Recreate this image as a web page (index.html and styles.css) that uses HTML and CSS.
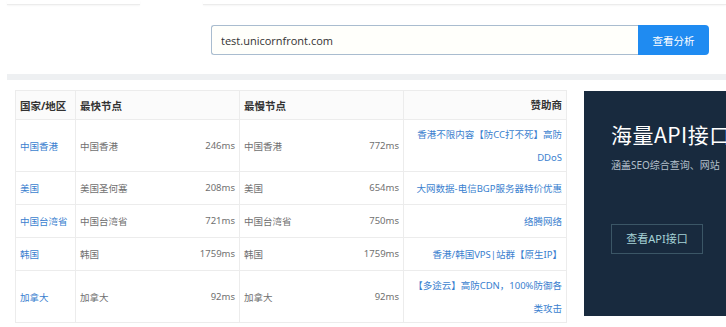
FILE: index.html
```html
<!DOCTYPE html>
<html>
<head>
    <meta charset="utf-8">
    <link rel="stylesheet" href="styles.css">
</head>
<body>
    <div class="top-strip">
        <div class="tab-box tab-left"></div>
        <div class="tab-box tab-right"></div>
    </div>

    <div class="search-row">
        <input class="search-input" type="text" value="test.unicornfront.com">
        <button class="search-btn">查看分析</button>
    </div>

    <div class="band"></div>

    <div class="main">
        <div class="table-wrap">
            <table class="speed">
                <tr>
                    <th class="c-area">国家/地区</th>
                    <th class="c-node">最快节点</th>
                    <th class="c-node">最慢节点</th>
                    <th class="c-ad">赞助商</th>
                </tr>
                <tr class="tall">
                    <td><a href="#">中国香港</a></td>
                    <td><span class="node"><span>中国香港</span><span>246ms</span></span></td>
                    <td><span class="node"><span>中国香港</span><span>772ms</span></span></td>
                    <td class="c-ad"><a href="#">香港不限内容【防CC打不死】高防DDoS</a></td>
                </tr>
                <tr>
                    <td><a href="#">美国</a></td>
                    <td><span class="node"><span>美国圣何塞</span><span>208ms</span></span></td>
                    <td><span class="node"><span>美国</span><span>654ms</span></span></td>
                    <td class="c-ad"><a href="#">大网数据-电信BGP服务器特价优惠</a></td>
                </tr>
                <tr>
                    <td><a href="#">中国台湾省</a></td>
                    <td><span class="node"><span>中国台湾省</span><span>721ms</span></span></td>
                    <td><span class="node"><span>中国台湾省</span><span>750ms</span></span></td>
                    <td class="c-ad"><a href="#">络腾网络</a></td>
                </tr>
                <tr>
                    <td><a href="#">韩国</a></td>
                    <td><span class="node"><span>韩国</span><span>1759ms</span></span></td>
                    <td><span class="node"><span>韩国</span><span>1759ms</span></span></td>
                    <td class="c-ad"><a href="#">香港/韩国VPS|站群【原生IP】</a></td>
                </tr>
                <tr class="tall">
                    <td><a href="#">加拿大</a></td>
                    <td><span class="node"><span>加拿大</span><span>92ms</span></span></td>
                    <td><span class="node"><span>加拿大</span><span>92ms</span></span></td>
                    <td class="c-ad"><a href="#">【多途云】高防CDN，100%防御各类攻击</a></td>
                </tr>
            </table>
        </div>

        <div class="promo">
            <div class="promo-title">海量API接口</div>
            <div class="promo-sub">涵盖SEO综合查询、网站</div>
            <a class="promo-btn" href="#">查看API接口</a>
        </div>
    </div>
</body>
</html>
```

FILE: styles.css
```css
body {
    margin: 0;
    padding-left: 7px;
    height: 327px;
    overflow: hidden;
    font-family: "Noto Sans", "Noto Sans CJK SC", sans-serif;
    font-size: 9.5px;
    color: #707070;
    background: #fff;
}

a {
    color: #3b7fcf;
    text-decoration: none;
}

/* top tabs, mostly cut off */

.top-strip {
    display: flex;
    height: 5px;
}

.tab-box {
    border-bottom: 1px solid #ececec;
    box-shadow: 0 1px 2px rgba(0, 0, 0, 0.04);
}

.tab-left {
    width: 133px;
}

.tab-right {
    flex: 1;
    margin-left: 63px;
}

/* search */

.search-row {
    display: flex;
    padding: 20px 0 0 204px;
    height: 30px;
}

.search-input {
    box-sizing: border-box;
    width: 427px;
    height: 30px;
    margin: 0;
    padding: 0 9px;
    border: 1px solid #a9bccf;
    border-right: none;
    border-radius: 3px 0 0 3px;
    background: #fffffb;
    font-family: "Open Sans", "Noto Sans", sans-serif;
    font-size: 11px;
    color: #333;
    outline: none;
}

.search-btn {
    width: 71px;
    height: 30px;
    margin: 0;
    padding: 0;
    border: none;
    border-radius: 0 4px 4px 0;
    background: #1f8bf1;
    color: #fff;
    font-family: "Noto Sans CJK SC", sans-serif;
    font-size: 10.5px;
}

.band {
    height: 6px;
    margin-top: 19px;
    background: #eef0f2;
}

/* main area */

.main {
    display: flex;
    align-items: flex-start;
}

.table-wrap {
    padding: 10px 0 0 8px;
}

.speed {
    width: 552px;
    border-collapse: collapse;
    table-layout: fixed;
}

.speed th,
.speed td {
    border: 1px solid #ececec;
    padding: 0 4px;
    text-align: left;
    vertical-align: middle;
}

.speed th {
    height: 28px;
    background: #fbfbfb;
    color: #333;
    font-size: 10.5px;
    font-weight: bold;
}

.speed td {
    height: 32px;
}

.speed tr.tall td {
    height: 51px;
}

.speed .c-area {
    width: 51px;
}

.speed .c-node {
    width: 155px;
}

.speed .c-ad {
    text-align: right;
    line-height: 23px;
}

.speed td.c-ad {
    padding-left: 2px;
}

.node {
    display: flex;
    justify-content: space-between;
}

/* promo panel */

.promo {
    flex: 0 0 220px;
    height: 225px;
    margin: 11px 0 0 17px;
    padding: 30px 0 0 27px;
    box-sizing: border-box;
    background: #182a3e;
    white-space: nowrap;
    overflow: hidden;
}

.promo-title {
    color: #fff;
    font-family: "Noto Sans CJK SC", sans-serif;
    font-size: 21px;
    letter-spacing: 0.5px;
    line-height: 26px;
}

.promo-sub {
    margin-top: 10px;
    color: #b5c0cc;
    font-size: 10px;
}

.promo-btn {
    display: inline-block;
    margin-top: 52px;
    width: 90px;
    height: 28px;
    line-height: 28px;
    text-align: center;
    border: 1px solid #3b5666;
    color: #a6d3d6;
    font-size: 11px;
}
```
